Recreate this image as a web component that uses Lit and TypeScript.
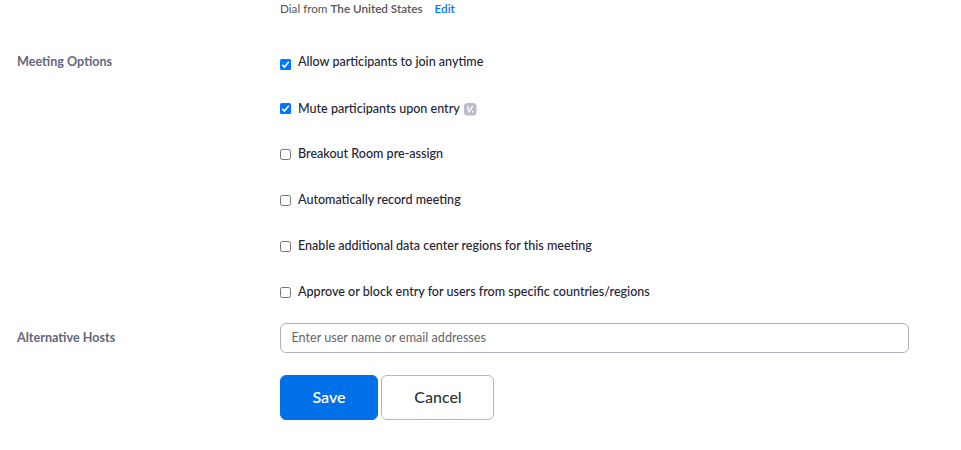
import { LitElement, html, css, svg } from "lit";
import { customElement } from "lit/decorators.js";

const options = [
  { label: "Allow participants to join anytime", on: true, cls: "first" },
  { label: "Mute participants upon entry", on: true, badge: true, cls: "second" },
  { label: "Breakout Room pre-assign", on: false },
  { label: "Automatically record meeting", on: false },
  { label: "Enable additional data center regions for this meeting", on: false },
  { label: "Approve or block entry for users from specific countries/regions", on: false },
];

@customElement("app-root")
export class AppRoot extends LitElement {
  static styles = css`
    :host { display: block; height: 450px; overflow: hidden; background: #fff; font: 12.6px/20px Lato, sans-serif; color: #232333; }
    * { box-sizing: border-box; }
    .dial { margin-left: 280px; height: 39px; font-size: 11.7px; line-height: 16px; color: #555; white-space: pre; }
    .dial b { font-weight: 600; }
    .edit { color: #0674ea; font-weight: 600; margin-left: 12px; }
    .row { display: grid; grid-template-columns: 263px 629px; margin-left: 17px; }
    .name { font-weight: 700; color: #66667a; }
    .options { height: 284px; }
    .options .name { padding-top: 13px; }
    .opt { height: 46px; display: flex; align-items: center; font-size: 12.56px; font-weight: 500; }
    .second span { padding-top: 2px; }
    .box { width: 11px; height: 11px; margin: 1px 7px 0 0; flex: none; }
    .first .box { margin-top: 5px; }
    .badge { margin: 2px 0 0 4px; width: 13px; height: 13px; }
    .hosts .name { padding-top: 5px; }
    .field { height: 30px; border: 1px solid #b0afc5; border-radius: 6px; padding: 4px 10.5px; color: #666; }
    .actions { display: flex; gap: 3px; margin: 22px 0 0 280px; }
    button { font: 500 16px/20px Lato, sans-serif; height: 45px; border-radius: 6px; padding: 0 0 2px; }
    .save { width: 98px; background: #0070e8; border: 1px solid #0070e8; color: #fff; font-weight: 600; }
    .cancel { width: 113px; background: #fff; border: 1px solid #b5b3c9; color: #333; padding-left: 1px; }
  `;

  box(on: boolean) {
    return html`<svg class="box" viewBox="0 0 11 11">
      ${on
        ? svg`<rect width="11" height="11" rx="1.5" fill="#0075ff"/><path d="M2.2 5.8 4.4 8 8.8 2.8" fill="none" stroke="#fff" stroke-width="1.7"/>`
        : svg`<rect x=".5" y=".5" width="10" height="10" rx="1.8" fill="#fff" stroke="#767676"/>`}
    </svg>`;
  }

  render() {
    return html`
      <div class="dial">Dial from <b>The United States</b><span class="edit">Edit</span></div>
      <div class="row options">
        <div class="name">Meeting Options</div>
        <div>
          ${options.map((o) => html`<div class="opt ${o.cls ?? ""}">${this.box(o.on)}<span>${o.label}</span>${o.badge
            ? html`<svg class="badge" viewBox="0 0 13 13"><rect width="12.5" height="12.5" rx="3.5" fill="#babacc"/><path d="M4.1 3v4.4M8.8 3 4.6 9.3" fill="none" stroke="#fff" stroke-width="1.4"/><path d="M7.9 8.8h1.6" stroke="#fff" stroke-width="1.5"/></svg>`
            : ""}</div>`)}
        </div>
      </div>
      <div class="row hosts">
        <div class="name">Alternative Hosts</div>
        <div class="field">Enter user name or email addresses</div>
      </div>
      <div class="actions"><button class="save">Save</button><button class="cancel">Cancel</button></div>
    `;
  }
}
